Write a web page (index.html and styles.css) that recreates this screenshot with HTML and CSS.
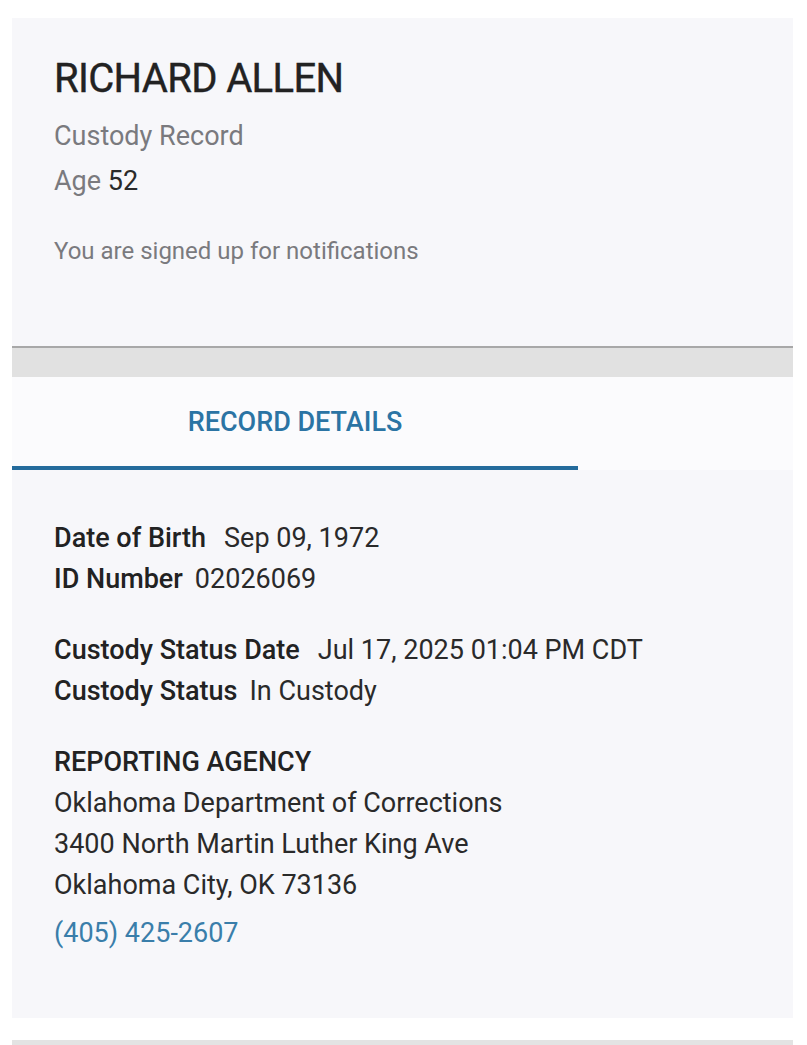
FILE: index.html
```html
<!DOCTYPE html>
<html>
<head>
<meta charset="utf-8">
<link rel="stylesheet" href="styles.css">
</head>
<body>
<div class="page">
  <section class="header">
    <h1 class="name">RICHARD ALLEN</h1>
    <div class="subtitle">Custody Record</div>
    <div class="age">Age <span class="age-value">52</span></div>
    <div class="notify">You are signed up for notifications</div>
  </section>
  <div class="divider"></div>
  <nav class="tabs">
    <div class="tab active">RECORD DETAILS</div>
  </nav>
  <section class="details">
    <div class="group">
      <div class="row"><span class="label">Date of Birth</span><span class="value">Sep 09, 1972</span></div>
      <div class="row"><span class="label">ID Number</span><span class="value">02026069</span></div>
    </div>
    <div class="group">
      <div class="row"><span class="label">Custody Status Date</span><span class="value">Jul 17, 2025 01:04 PM CDT</span></div>
      <div class="row"><span class="label">Custody Status</span><span class="value">In Custody</span></div>
    </div>
    <div class="group agency">
      <div class="agency-title">REPORTING AGENCY</div>
      <div class="line">Oklahoma Department of Corrections</div>
      <div class="line">3400 North Martin Luther King Ave</div>
      <div class="line">Oklahoma City, OK 73136</div>
      <a class="phone" href="#">(405) 425-2607</a>
    </div>
  </section>
  <div class="footer-band"></div>
</div>
</body>
</html>
```
FILE: styles.css
```css
html, body {
  margin: 0;
  padding: 0;
  background: #ffffff;
  font-family: Roboto, "Liberation Sans", sans-serif;
}
.page {
  padding: 18px 14px 0 12px;
}
.header {
  background: #f7f7fa;
  height: 328px;
  box-sizing: border-box;
  padding: 38px 42px 0 42px;
}
.name {
  margin: 0;
  font-size: 40px;
  font-weight: 400;
  color: #222;
  line-height: 46px;
  letter-spacing: -0.65px;
  -webkit-text-stroke: 0.4px #222;
}
.subtitle {
  margin-top: 18px;
  font-size: 27px;
  color: #7a7a7e;
  line-height: 32px;
}
.age {
  margin-top: 13px;
  font-size: 27px;
  color: #7a7a7e;
  line-height: 32px;
}
.age-value {
  color: #2a2a2a;
}
.notify {
  margin-top: 40px;
  font-size: 24px;
  color: #7a7a7e;
  line-height: 28px;
}
.divider {
  border-top: 2px solid #a8a8a8;
  background: #e1e1e1;
  height: 29px;
}
.tabs {
  background: #fbfbfd;
  height: 93px;
  display: flex;
}
.tab {
  width: 566px;
  box-sizing: border-box;
  display: flex;
  align-items: center;
  justify-content: center;
  padding-bottom: 0;
  font-size: 27px;
  font-weight: 500;
  color: #2b74a4;
  border-bottom: 4px solid #246b9c;
}
.details {
  background: #f7f7fa;
  height: 548px;
  box-sizing: border-box;
  padding: 48px 42px 0 42px;
  color: #2a2a2a;
}
.group {
  margin-bottom: 30px;
}
.row {
  font-size: 27px;
  line-height: 41px;
  display: flex;
  gap: 18px;
}
.row + .row .label + .value {
  margin-left: -6px;
}
.label {
  font-weight: 500;
  color: #222;
}
.value {
  color: #2a2a2a;
}
.agency-title {
  font-size: 27px;
  font-weight: 500;
  line-height: 41px;
  color: #222;
}
.line {
  font-size: 27px;
  line-height: 41px;
}
.phone {
  display: block;
  margin-top: 7px;
  font-size: 27px;
  line-height: 41px;
  color: #3a7eaa;
  text-decoration: none;
}
.footer-band {
  margin-top: 22px;
  height: 10px;
  background: #e3e3e3;
}
```
